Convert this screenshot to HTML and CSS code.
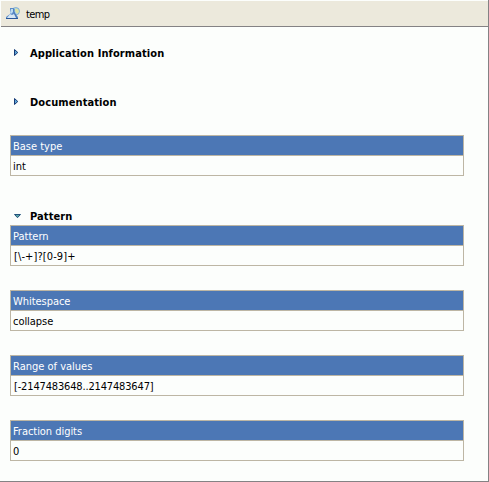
FILE: index.html
```html
<!DOCTYPE html>
<html lang="en">
<head>
<meta charset="utf-8">
<title>temp</title>
<link rel="stylesheet" href="styles.css">
</head>
<body>
<main class="panel">
  <header class="titlebar">
    <svg class="type-icon" width="14" height="13" viewBox="0 0 14 13">
      <circle cx="9.8" cy="4.2" r="3.7" fill="#a5d0ed" stroke="#75a5cc" stroke-width=".8"/>
      <path d="M9 1.5l3 .5 1 3-2 2-2-3z" fill="#dce2a2"/>
      <path d="M4 1h4v4l4 5v2H0v-2l4-3z" fill="#5d8cc7"/>
      <path d="M5 2h2v3L5 7 4 6z" fill="#bcdcf3"/>
      <path d="M4 7l2 1 2-1 2 4H1z" fill="#d6e7f5"/>
      <path d="M0 11.5h12" stroke="#28569a" fill="none"/>
      <path d="M8 2v3l3 6" stroke="#4a78b5" fill="none"/>
    </svg>
    <span class="name">temp</span>
  </header>
  <div class="content">
    <h2 class="section info"><svg class="arrow" width="5" height="8" viewBox="0 0 5 8"><path d="M.5 .5v6L3.8 3.5z" fill="#5ca5d5" stroke="#173b76"/></svg><span>Application Information</span></h2>
    <h2 class="section documentation"><svg class="arrow" width="5" height="8" viewBox="0 0 5 8"><path d="M.5 .5v6L3.8 3.5z" fill="#5ca5d5" stroke="#173b76"/></svg><span>Documentation</span></h2>
    <dl class="property base"><dt>Base type</dt><dd>int</dd></dl>
    <h2 class="section pattern"><svg class="arrow" width="8" height="5" viewBox="0 0 8 5"><path d="M.5 .5h6L3.5 3.7z" fill="#5ca5a5" stroke="#23527c"/></svg><span>Pattern</span></h2>
    <dl class="property"><dt>Pattern</dt><dd class="expression">[\-+]?[0-9]+</dd></dl>
    <dl class="property tight"><dt>Whitespace</dt><dd>collapse</dd></dl>
    <dl class="property"><dt>Range of values</dt><dd class="range">[-2147483648..2147483647]</dd></dl>
    <dl class="property tight"><dt>Fraction digits</dt><dd>0</dd></dl>
  </div>
</main>
</body>
</html>
```
FILE: styles.css
```css
* { box-sizing: border-box; }
body {
  margin: 0;
  background: #fcfefc;
  color: #000;
  font: 11px/14px "DejaVu Sans Condensed", "DejaVu Sans", sans-serif;
  font-stretch: condensed;
}
.panel {
  height: 482px;
  padding: 1px 0 0 1px;
  border-right: 1px solid #848284;
  border-bottom: 1px solid #848284;
  overflow: hidden;
}
.titlebar {
  display: flex;
  align-items: center;
  height: 26px;
  padding-left: 5px;
  border-bottom: 1px solid #848284;
  background: #ece9dc;
}
.type-icon { margin-right: 6px; }
.name { padding-top: 2px; letter-spacing: -.6px; }
.content { padding: 20px 24px 0 9px; }
.section {
  display: flex;
  align-items: center;
  height: 14px;
  margin: 0;
  padding-left: 4px;
  font-size: 11px;
  font-weight: bold;
  letter-spacing: .09px;
}
.section span { margin-left: auto; width: 434px; }
.arrow { margin-top: -2px; }
.documentation { margin-top: 35px; }
.section.pattern { margin: 34px 0 1px; }
.property {
  margin: 0 0 24px;
  border: 1px solid #bdb6a4;
}
.property dt, .property dd {
  height: 19px;
  margin: 0;
  padding: 4px 2px 1px;
}
.property dt {
  height: 20px;
  background: #4c77b5;
  color: #fff;
  border-bottom: 1px solid #bdb6a4;
}
.property.base { margin: 25px 0 0; }
.property .range { padding-left: 3px; letter-spacing: -.16px; }
.property .expression { padding-left: 3px; letter-spacing: .1px; }
.tight { letter-spacing: -.04px; }
```
